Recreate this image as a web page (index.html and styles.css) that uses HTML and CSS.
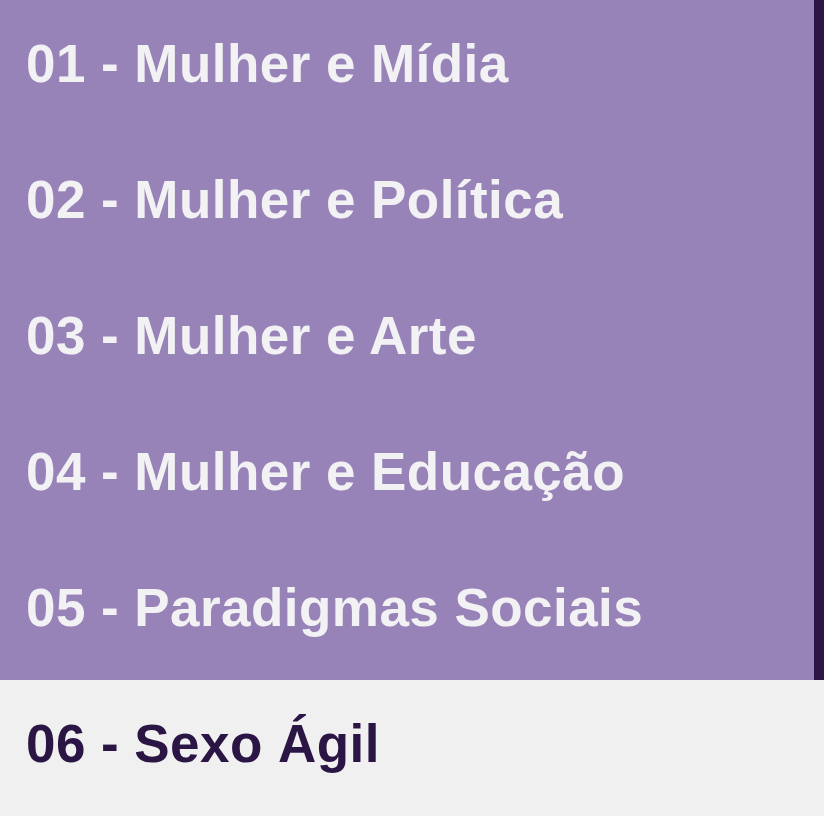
FILE: index.html
```html
<!DOCTYPE html>
<html lang="pt">
<head>
<meta charset="utf-8">
<title>Menu</title>
<link rel="stylesheet" href="styles.css">
</head>
<body>
<nav class="menu">
  <div class="items">
    <a class="item" href="#">01 - Mulher e Mídia</a>
    <a class="item" href="#">02 - Mulher e Política</a>
    <a class="item" href="#">03 - Mulher e Arte</a>
    <a class="item" href="#">04 - Mulher e Educação</a>
    <a class="item" href="#">05 - Paradigmas Sociais</a>
  </div>
  <a class="item active" href="#">06 - Sexo Ágil</a>
</nav>
</body>
</html>
```
FILE: styles.css
```css
html, body {
  margin: 0;
  padding: 0;
}
body {
  width: 824px;
  height: 816px;
  background: #f0f0f0;
  font-family: "Liberation Sans", Arial, sans-serif;
  overflow: hidden;
}
.menu {
  display: flex;
  flex-direction: column;
}
.items {
  display: flex;
  flex-direction: column;
  background: #9883b8;
  border-right: 10px solid #2a1545;
}
.item {
  display: flex;
  align-items: center;
  height: 136px;
  padding: 0 0 9px 26px;
  box-sizing: border-box;
  color: #f2f1f3;
  text-decoration: none;
  font-weight: 700;
  font-size: 53px;
  letter-spacing: 0.45px;
}
.item.active {
  background: #f0f0f0;
  color: #2a1545;
}
```
